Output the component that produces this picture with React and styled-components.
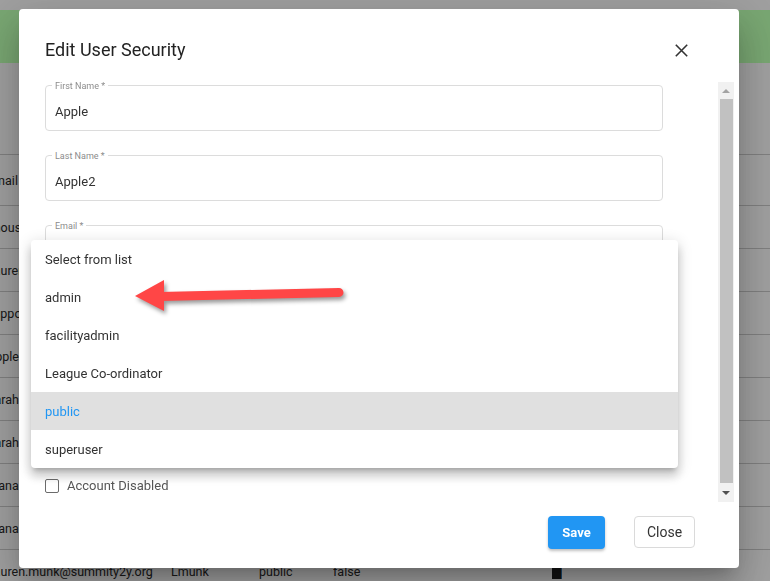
import styled, { createGlobalStyle } from 'styled-components';

const GlobalStyle = createGlobalStyle`
  html, body {
    margin: 0;
    padding: 0;
    background: #f5f5f5;
    font-family: Roboto, "Liberation Sans", Arial, sans-serif;
  }
  * { box-sizing: border-box; }
`;

const Page = styled.div`
  position: relative;
  width: 770px;
  height: 581px;
  overflow: hidden;
  background: #f5f5f5;
`;

const AppBar = styled.div`
  margin-top: 10px;
  height: 53px;
  background: #b9ffaf;
`;

const Table = styled.div`
  margin-left: -13px;
  padding-top: 91px;
  font-size: 12.5px;
  color: #262626;
`;

const Row = styled.div`
  display: grid;
  grid-template-columns: 184px 88px 74px 219px 40px;
  align-items: center;
  height: ${p => (p.head ? '51px' : '43px')};
  border-top: 1px solid #c4c4c4;
`;

const Cell = styled.div`
  white-space: nowrap;
  overflow: hidden;
`;

const EditMark = styled.span`
  display: block;
  width: 10px;
  height: 11px;
  margin-top: 4px;
  background: #1b1b1b;
  border-right: 1px solid #2a6fa8;
`;

const Overlay = styled.div`
  position: fixed;
  inset: 0;
  background: rgba(0, 0, 0, 0.35);
  padding: 9px 0 0 19px;
`;

const Dialog = styled.div`
  position: relative;
  width: 720px;
  height: 559px;
  background: #ffffff;
  border-radius: 4px;
  display: flex;
  flex-direction: column;
  box-shadow: 0 11px 15px -7px rgba(0,0,0,.2), 0 24px 38px 3px rgba(0,0,0,.14), 0 9px 46px 8px rgba(0,0,0,.12);
`;

const Header = styled.div`
  display: flex;
  align-items: center;
  justify-content: space-between;
  padding: 27px 51px 0 26px;
  height: 55px;
`;

const Title = styled.h2`
  margin: 0;
  font-size: 18px;
  line-height: 28px;
  font-weight: 400;
  color: #222222;
`;

const CloseIcon = styled.button`
  border: none;
  background: none;
  padding: 0;
  width: 13px;
  height: 13px;
  display: flex;
  cursor: pointer;
`;

const ScrollArea = styled.div`
  margin-top: 18px;
  height: 420px;
  display: flex;
  justify-content: space-between;
  padding: 0 5px 0 26px;
`;

const Form = styled.div`
  width: 618px;
  padding-top: 3px;
  display: flex;
  flex-direction: column;
  gap: 24px;
`;

const Field = styled.div`
  position: relative;
  height: 46px;
  border: 1px solid #dcdcdc;
  border-radius: 4px;
  padding: 17px 9px 0;
  font-size: 13px;
  line-height: 18px;
  color: #333333;
`;

const Legend = styled.span`
  position: absolute;
  top: -5px;
  left: 6px;
  padding: 0 3px;
  background: #ffffff;
  font-size: 9px;
  line-height: 11px;
  color: #8c8c8c;
`;

const CheckRow = styled.label`
  display: flex;
  align-items: center;
  gap: 8px;
  margin-top: 43px;
  font-size: 13px;
  color: #555555;
`;

const Box = styled.span`
  width: 14px;
  height: 14px;
  border: 1px solid #6b6b6b;
  border-radius: 2px;
`;

const Scrollbar = styled.div`
  width: 16px;
  height: 420px;
  background: #f1f1f1;
  display: flex;
  flex-direction: column;
  align-items: center;
`;

const ArrowBtn = styled.div`
  height: ${p => p.h}px;
  display: flex;
  align-items: center;
  justify-content: center;
  &::after {
    content: '';
    border-left: 4px solid transparent;
    border-right: 4px solid transparent;
    ${p => (p.down ? 'border-top: 4px solid #505050;' : 'border-bottom: 4px solid #a3a3a3;')}
  }
`;

const Thumb = styled.div`
  width: 13px;
  margin-left: 1px;
  flex: 1;
  background: #c1c1c1;
`;

const Footer = styled.div`
  display: flex;
  justify-content: flex-end;
  align-items: flex-start;
  gap: 29px;
  padding: 14px 44px 0 0;
`;

const Button = styled.button`
  height: ${p => (p.primary ? '33px' : '32px')};
  width: ${p => (p.primary ? '57px' : '61px')};
  padding: 0;
  border-radius: 4px;
  font-family: Roboto, "Liberation Sans", Arial, sans-serif;
  font-size: ${p => (p.primary ? '13px' : '14px')};
  font-weight: ${p => (p.primary ? 700 : 400)};
  color: ${p => (p.primary ? '#ffffff' : '#333333')};
  background: ${p => (p.primary ? '#2196f3' : '#ffffff')};
  border: ${p => (p.primary ? 'none' : '1px solid #dadada')};
  box-shadow: ${p => (p.primary ? '0 2px 3px rgba(0,0,0,.25)' : 'none')};
  cursor: pointer;
`;

const Menu = styled.ul`
  position: absolute;
  left: 12px;
  top: 231px;
  width: 647px;
  margin: 0;
  padding: 0;
  list-style: none;
  background: #ffffff;
  border-radius: 4px;
  box-shadow: 0 5px 5px -3px rgba(0,0,0,.2), 0 8px 10px 1px rgba(0,0,0,.14), 0 3px 14px 2px rgba(0,0,0,.12);
  overflow: hidden;
`;

const MenuItem = styled.li`
  height: 38px;
  display: flex;
  align-items: center;
  padding-left: 14px;
  font-size: 13px;
  color: ${p => (p.selected ? '#2196f3' : '#333333')};
  background: ${p => (p.selected ? '#e0e0e0' : 'transparent')};
`;

const Annotation = styled.svg`
  position: absolute;
  left: 0;
  top: 0;
  pointer-events: none;
  filter: drop-shadow(2px 3px 2px rgba(0,0,0,.4));
`;

const rows = [
  ['Lhouse@summity2y.org', 'lhouse', 'admin', 'false'],
  ['Lauren@summity2y.org', 'lauren', 'public', 'false'],
  ['support@summity2y.org', 'support', 'superuser', 'false'],
  ['Apple@summity2y.org', 'Apple', 'public', 'false'],
  ['Sarah@summity2y.org', 'sarah', 'public', 'false'],
  ['Sarah.b@summity2y.org', 'sarahb', 'public', 'false'],
  ['Diana@summity2y.org', 'diana', 'public', 'false'],
  ['Diana.k@summity2y.org', 'dianak', 'public', 'false'],
  ['Lauren.munk@summity2y.org', 'Lmunk', 'public', 'false'],
];

const roles = ['Select from list', 'admin', 'facilityadmin', 'League Co-ordinator', 'public', 'superuser'];

const App = () => {
  return (
    <Page>
      <GlobalStyle />
      <AppBar />
      <Table>
        <Row head>
          <Cell>Email</Cell>
          <Cell>Username</Cell>
          <Cell>Role</Cell>
          <Cell>Disabled</Cell>
          <Cell />
        </Row>
        {rows.map(r => (
          <Row key={r[0]}>
            <Cell>{r[0]}</Cell>
            <Cell>{r[1]}</Cell>
            <Cell>{r[2]}</Cell>
            <Cell>{r[3]}</Cell>
            <Cell><EditMark /></Cell>
          </Row>
        ))}
      </Table>

      <Overlay>
        <Dialog>
          <Header>
            <Title>Edit User Security</Title>
            <CloseIcon aria-label="close">
              <svg width="13" height="13" viewBox="0 0 13 13">
                <path d="M0.8 0.8 L12.2 12.2 M12.2 0.8 L0.8 12.2" stroke="#333" strokeWidth="1.6" fill="none" />
              </svg>
            </CloseIcon>
          </Header>

          <ScrollArea>
            <Form>
              <Field><Legend>First Name *</Legend>Apple</Field>
              <Field><Legend>Last Name *</Legend>Apple2</Field>
              <Field><Legend>Email *</Legend>apple@summity2y.org</Field>
              <Field><Legend>Username *</Legend>Apple</Field>
              <Field><Legend>Role *</Legend>public</Field>
              <CheckRow>
                <Box />
                Account Disabled
              </CheckRow>
            </Form>
            <Scrollbar>
              <ArrowBtn h={17} />
              <Thumb />
              <ArrowBtn h={19} down />
            </Scrollbar>
          </ScrollArea>

          <Footer>
            <Button primary>Save</Button>
            <Button>Close</Button>
          </Footer>

          <Menu>
            {roles.map(r => (
              <MenuItem key={r} selected={r === 'public'}>{r}</MenuItem>
            ))}
          </Menu>
        </Dialog>
      </Overlay>

      <Annotation width="770" height="581" viewBox="0 0 770 581">
        <path d="M339 292.5 L160 296.5" stroke="#ff4646" strokeWidth="9" strokeLinecap="round" fill="none" />
        <polygon points="135,296 164,280 164,311" fill="#ff4646" />
      </Annotation>
    </Page>
  );
};

export default App;
